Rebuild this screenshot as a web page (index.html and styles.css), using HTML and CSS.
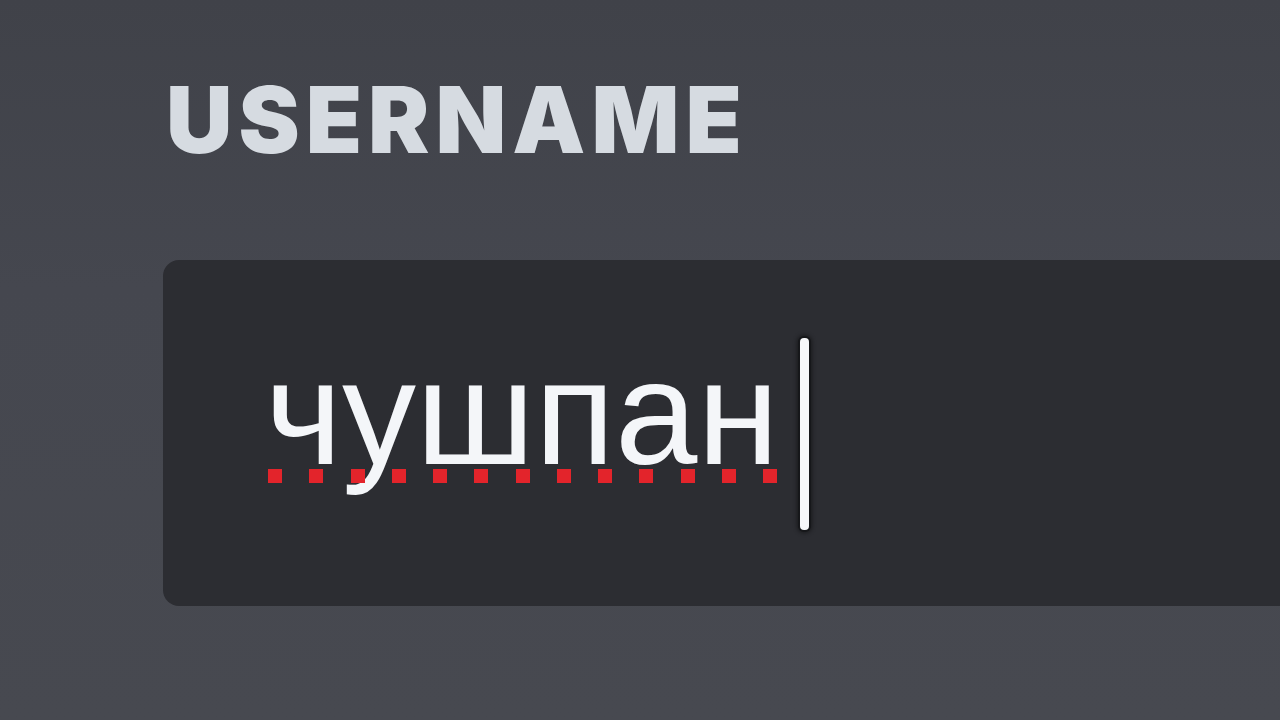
FILE: index.html
```html
<!DOCTYPE html>
<html lang="ru">
<head>
<meta charset="utf-8">
<title>Username</title>
<link rel="stylesheet" href="styles.css">
</head>
<body>
<main class="page">
  <div class="label">USERNAME</div>
  <div class="field">
    <span class="value">чушпан</span>
    <span class="caret"></span>
  </div>
</main>
</body>
</html>
```
FILE: styles.css
```css
html, body {
  margin: 0;
  padding: 0;
  height: 100%;
}
body {
  background: linear-gradient(180deg, #404249 0%, #45474f 40%, #474950 100%);
  overflow: hidden;
}
.page {
  padding: 75px 0 0 166px;
}
.label {
  font-family: Inter, "Noto Sans", sans-serif;
  font-weight: 900;
  font-size: 92px;
  line-height: 90px;
  color: #d6dbe1;
  letter-spacing: 6px;
}
.field {
  margin-top: 95px;
  margin-left: -3px;
  width: 1300px;
  height: 346px;
  box-sizing: border-box;
  background: #2c2d32;
  border-radius: 16px;
  padding: 78px 0 0 102px;
  display: flex;
  align-items: flex-start;
}
.value {
  position: relative;
  font-family: "Liberation Sans", Arial, sans-serif;
  font-size: 148px;
  line-height: 150px;
  color: #f4f6f9;
}
.value::after {
  content: "";
  position: absolute;
  left: 3px;
  top: 131px;
  width: 512px;
  height: 14px;
  background: repeating-linear-gradient(to right, #e3242b 0 14px, transparent 14px 41.25px);
}
.caret {
  margin-left: 21px;
  width: 9px;
  height: 192px;
  background: #f6f7f9;
  border-radius: 4px;
  box-shadow: 0 0 0 2px #16171a, 0 0 4px 3px rgba(0, 0, 0, 0.45);
}
```
